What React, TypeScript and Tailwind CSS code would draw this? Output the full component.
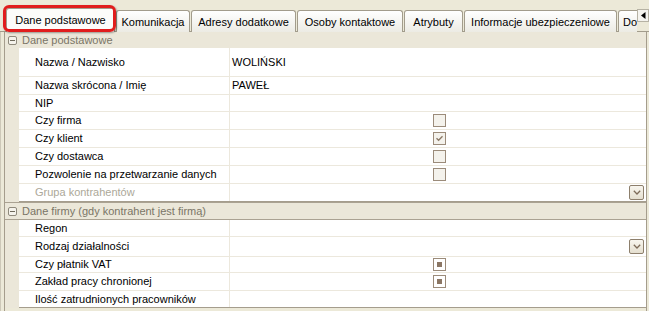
import React from "react";

const FONT = { fontFamily: '"Liberation Sans", Arial, sans-serif' };

function Tab({ label, w, active }: { label: string; w: number; active?: boolean }) {
  if (active) {
    return (
      <div
        className="relative z-10 flex h-[24px] shrink-0 items-center justify-center rounded-t-[3px] border border-b-0 border-[#a29c8c] bg-[#fcfcfa] text-[11px] text-black"
        style={{ width: w }}
      >
        <span className="-mt-[1px]">{label}</span>
      </div>
    );
  }
  return (
    <div
      className="flex h-[22px] shrink-0 items-center justify-center rounded-t-[3px] border border-b-0 border-[#a29c8c] bg-gradient-to-b from-[#ffffff] to-[#ecebe4] text-[11px] text-black"
      style={{ width: w }}
    >
      <span className="mt-[1px] whitespace-nowrap">{label}</span>
    </div>
  );
}

function Checkbox({ state }: { state: "empty" | "checked" | "ind" }) {
  return (
    <div
      className={
        "flex h-[13px] w-[13px] items-center justify-center border border-[#9b8b7a] " +
        (state === "ind" ? "bg-white" : "bg-[#f4f2ec]")
      }
    >
      {state === "checked" && (
        <svg width="9" height="9" viewBox="0 0 9 9">
          <path d="M1.5 4.2 L3.6 6.3 L7.5 2.2" stroke="#8a7866" strokeWidth="1.3" fill="none" />
        </svg>
      )}
      {state === "ind" && <div className="h-[5px] w-[5px] bg-[#8b7664]" />}
    </div>
  );
}

function DropBtn() {
  return (
    <div className="mr-[2px] flex h-[15px] w-[15px] items-center justify-center rounded-[2px] border border-[#8d7f6c] bg-gradient-to-b from-[#f8f6ef] to-[#e5dfcf]">
      <svg width="8" height="5" viewBox="0 0 8 5">
        <path d="M0.8 0.8 L4 4 L7.2 0.8" stroke="#7d6b58" strokeWidth="1.3" fill="none" />
      </svg>
    </div>
  );
}

function Row({
  label,
  h,
  value,
  check,
  drop,
  disabled,
  last,
}: {
  label: string;
  h: number;
  value?: string;
  check?: "empty" | "checked" | "ind";
  drop?: boolean;
  disabled?: boolean;
  last?: boolean;
}) {
  return (
    <div className="flex shrink-0" style={{ height: h }}>
      <div className="w-[14px] shrink-0 bg-[#ebe7d9]" />
      <div
        className={
          "flex flex-1 " + (last ? "border-b border-[#a59d8d]" : "border-b border-[#ece8dd]")
        }
      >
        <div
          className={
            "flex w-[211px] shrink-0 items-center border-r border-[#ece8dd] bg-white pl-[16px] text-[11px] " +
            (disabled ? "text-[#aca899]" : "text-black")
          }
        >
          {label}
        </div>
        <div
          className={
            "flex flex-1 items-center bg-white pl-[2px] text-[11px] text-black " +
            (check ? "justify-center" : drop ? "justify-end" : "")
          }
        >
          {value}
          {check && <Checkbox state={check} />}
          {drop && <DropBtn />}
        </div>
      </div>
    </div>
  );
}

function Header({ label, h, bordered }: { label: string; h: number; bordered?: boolean }) {
  return (
    <div
      className={
        "flex shrink-0 items-center bg-[#ebe7d9] pl-[3px] text-[11px] text-[#7a7566] " +
        (bordered ? "border-y border-[#aaa292]" : "")
      }
      style={{ height: h }}
    >
      <div className="mr-[5px] flex h-[9px] w-[9px] items-center justify-center rounded-[2px] border border-[#8f8a7c] bg-[#f5f3ec]">
        <div className="h-[1px] w-[5px] bg-[#6f6a5c]" />
      </div>
      <span className="whitespace-nowrap">{label}</span>
    </div>
  );
}

export default function App() {
  return (
    <div className="h-[311px] w-[649px] overflow-hidden bg-[#ece9d8]" style={FONT}>
      {/* tab strip */}
      <div className="relative flex h-[32px] items-end border-b border-[#a29c8c] pl-[6px]">
        <div className="flex w-[631px] items-end gap-[1px] overflow-hidden -mb-[1px]">
          <Tab label="Dane podstawowe" w={109} active />
          <Tab label="Komunikacja" w={74} />
          <Tab label="Adresy dodatkowe" w={105} />
          <Tab label="Osoby kontaktowe" w={106} />
          <Tab label="Atrybuty" w={59} />
          <Tab label="Informacje ubezpieczeniowe" w={153} />
          <div className="flex h-[22px] w-[30px] shrink-0 items-center rounded-t-[3px] border border-b-0 border-[#a29c8c] bg-gradient-to-b from-[#ffffff] to-[#ecebe4] pl-[4px] text-[11px] text-black">
            <span className="mt-[1px]">Do</span>
          </div>
        </div>
        <div className="mb-[9px] flex h-[13px] w-[12px] items-center justify-center border border-[#b6b2a4] bg-[#f4f3ee]">
          <svg width="5" height="7" viewBox="0 0 5 7">
            <path d="M4.5 0 L0 3.5 L4.5 7 Z" fill="#000" />
          </svg>
        </div>
        {/* red highlight around active tab */}
        <div className="pointer-events-none absolute left-[3px] top-[5px] z-20 h-[27px] w-[113px] rounded-[6px] border-[3px] border-[#e11d1d] shadow-[1px_1px_2px_rgba(0,0,0,0.35)]" />
      </div>

      {/* page body */}
      <div className="flex h-[279px] border-l border-[#cdc8b8]">
        <div className="ml-[3px] flex w-[643px] flex-col border-x border-[#a59d8d]">
          <Header label="Dane podstawowe" h={16} />
          <Row label="Nazwa / Nazwisko" h={29} value="WOLIŃSKI" />
          <Row label="Nazwa skrócona / Imię" h={18} value="PAWEŁ" />
          <Row label="NIP" h={17} />
          <Row label="Czy firma" h={18} check="empty" />
          <Row label="Czy klient" h={18} check="checked" />
          <Row label="Czy dostawca" h={18} check="empty" />
          <Row label="Pozwolenie na przetwarzanie danych" h={18} check="empty" />
          <Row label="Grupa kontrahentów" h={18} drop disabled last />
          <Header label="Dane firmy (gdy kontrahent jest firmą)" h={18} bordered />
          <Row label="Regon" h={17} />
          <Row label="Rodzaj działalności" h={20} drop />
          <Row label="Czy płatnik VAT" h={16} check="ind" />
          <Row label="Zakład pracy chronionej" h={18} check="ind" />
          <Row label="Ilość zatrudnionych pracowników" h={17} last />
        </div>
      </div>
    </div>
  );
}
